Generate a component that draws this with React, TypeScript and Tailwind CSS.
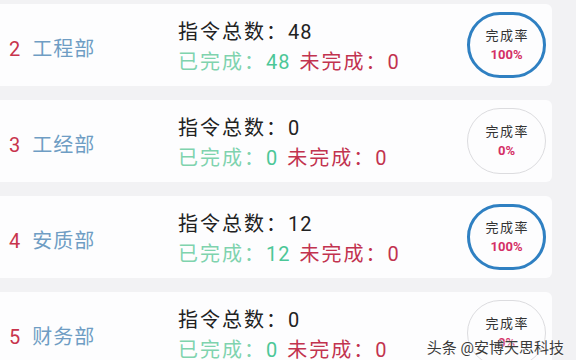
import React from 'react';

type Dept = {
  no: number;
  name: string;
  total: number;
  done: number;
  undone: number;
};

const DEPTS: Dept[] = [
  { no: 2, name: '工程部', total: 48, done: 48, undone: 0 },
  { no: 3, name: '工经部', total: 0, done: 0, undone: 0 },
  { no: 4, name: '安质部', total: 12, done: 12, undone: 0 },
  { no: 5, name: '财务部', total: 0, done: 0, undone: 0 },
];

function RateBadge({ total, done }: { total: number; done: number }) {
  const rate = total === 0 ? 0 : Math.round((done / total) * 100);
  const full = rate > 0;
  return (
    <div
      className={`w-[79px] h-[66px] rounded-full flex flex-col items-center justify-center shrink-0 ${
        full ? 'border-[3px] border-[#2f80c2]' : 'border-[1.5px] border-[#dcdcdf]'
      }`}
    >
      <span className="text-[13px] leading-none text-[#333] tracking-[1.5px] pl-[1.5px]">完成率</span>
      <span className="mt-[6px] text-[13px] leading-none font-bold text-[#d42f66]">{rate}%</span>
    </div>
  );
}

function DeptCard({ d }: { d: Dept }) {
  return (
    <div className="h-[82px] w-[552px] bg-[#fdfdfe] rounded-r-[6px] flex items-center shrink-0">
      <div className="w-[178px] pl-[9px] text-[20px] leading-none pt-[8px]">
        <span className="text-[#c8344c]">{d.no}</span>
        <span className="ml-[12px] text-[#6f9dc4] tracking-[1px]">{d.name}</span>
      </div>
      <div className="flex-1 flex flex-col text-[20px] leading-none pt-[4px] tracking-[2px]">
        <div className="text-[#222]">
          指令总数：<span className="tracking-[1px]">{d.total}</span>
        </div>
        <div className="mt-[10px] flex items-baseline">
          <span className="text-[#7fd3ae]">已完成：</span>
          <span className="text-[#4cc797] tracking-[1px]">{d.done}</span>
          <span className="ml-[9px] text-[#c2334f]">未完成：{d.undone}</span>
        </div>
      </div>
      <div className="mr-[6px]">
        <RateBadge total={d.total} done={d.done} />
      </div>
    </div>
  );
}

export default function App() {
  return (
    <div
      className="relative w-[576px] h-[360px] overflow-hidden bg-[#f2f2f4] pt-[4px] flex flex-col gap-[14px]"
      style={{ fontFamily: 'Roboto, "Noto Sans CJK SC", sans-serif' }}
    >
      {DEPTS.map((d) => (
        <DeptCard key={d.no} d={d} />
      ))}
      <div className="absolute right-[12px] bottom-[1px] text-[15px] text-[#3a3a3a] [text-shadow:0_0_2px_#fff,0_0_2px_#fff]">
        头条 @安博天思科技
      </div>
    </div>
  );
}
